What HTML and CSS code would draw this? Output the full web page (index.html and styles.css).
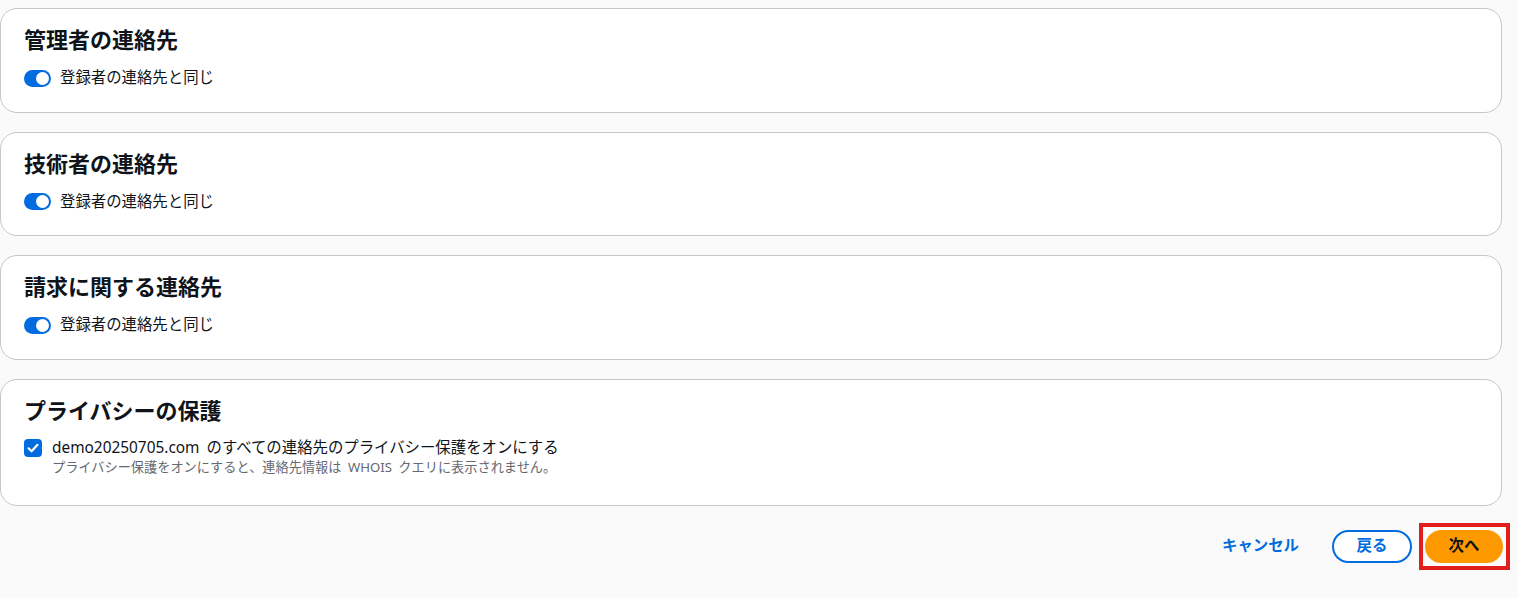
FILE: index.html
```html
<!DOCTYPE html>
<html lang="ja">
<head>
<meta charset="utf-8">
<title>連絡先</title>
<link rel="stylesheet" href="styles.css">
</head>
<body>
<main class="page">
  <section class="card">
    <h2 class="card-title">管理者の連絡先</h2>
    <label class="toggle-row">
      <span class="toggle"><span class="knob"></span></span>
      <span class="toggle-label">登録者の連絡先と同じ</span>
    </label>
  </section>
  <section class="card">
    <h2 class="card-title">技術者の連絡先</h2>
    <label class="toggle-row">
      <span class="toggle"><span class="knob"></span></span>
      <span class="toggle-label">登録者の連絡先と同じ</span>
    </label>
  </section>
  <section class="card">
    <h2 class="card-title">請求に関する連絡先</h2>
    <label class="toggle-row">
      <span class="toggle"><span class="knob"></span></span>
      <span class="toggle-label">登録者の連絡先と同じ</span>
    </label>
  </section>
  <section class="card card-privacy">
    <h2 class="card-title">プライバシーの保護</h2>
    <div class="check-row">
      <span class="checkbox">
        <svg viewBox="0 0 18 18" width="18" height="18"><polyline points="4.5,9.3 7.6,12.3 13.5,5.8" fill="none" stroke="#fff" stroke-width="2.2" stroke-linecap="round" stroke-linejoin="round"/></svg>
      </span>
      <div class="check-text">
        <div class="check-label">demo20250705.com のすべての連絡先のプライバシー保護をオンにする</div>
        <div class="check-desc">プライバシー保護をオンにすると、連絡先情報は WHOIS クエリに表示されません。</div>
      </div>
    </div>
  </section>
  <div class="actions">
    <button class="btn btn-link" type="button">キャンセル</button>
    <button class="btn btn-normal" type="button">戻る</button>
    <span class="highlight">
      <button class="btn btn-primary" type="button">次へ</button>
    </span>
  </div>
</main>
</body>
</html>
```

FILE: styles.css
```css
* { box-sizing: border-box; }
html, body {
  margin: 0;
  padding: 0;
  background: #fafafa;
}
body {
  font-family: "Noto Sans", "Noto Sans CJK JP", sans-serif;
  color: #0f141a;
  font-size: 15.4px;
  min-height: 598px;
}
.page {
  padding: 8px 16px 30px 0;
  display: flex;
  flex-direction: column;
  gap: 19px;
}
.card {
  background: #ffffff;
  border: 1px solid #c6c6cd;
  border-radius: 17px;
  padding: 15px 23px 22px 23px;
  height: 104.5px;
}
.card-privacy {
  height: 127px;
}
.card-title {
  margin: 0;
  font-size: 22px;
  line-height: 30px;
  font-weight: 700;
  color: #0f141a;
}
.toggle-row {
  margin-top: 13px;
  display: flex;
  align-items: center;
  gap: 9px;
  height: 22px;
}
.toggle {
  width: 27px;
  height: 17px;
  border-radius: 9px;
  background: #006ce0;
  display: flex;
  align-items: center;
  justify-content: flex-end;
  padding: 0 2px;
  flex-shrink: 0;
}
.knob {
  width: 13px;
  height: 13px;
  border-radius: 50%;
  background: #ffffff;
}
.toggle-label {
  font-size: 15.4px;
  line-height: 22px;
}
.check-row {
  margin-top: 12px;
  display: flex;
  align-items: flex-start;
  gap: 10px;
}
.checkbox {
  width: 18px;
  height: 18px;
  border-radius: 4px;
  background: #006ce0;
  margin-top: 2px;
  display: flex;
  flex-shrink: 0;
}
.check-label {
  font-size: 15.4px;
  line-height: 22px;
  word-spacing: 3px;
}
.check-desc {
  font-size: 13.2px;
  line-height: 17px;
  color: #656871;
  word-spacing: 3px;
}
.actions {
  margin-top: 5px;
  display: flex;
  justify-content: flex-end;
  align-items: center;
  gap: 9px;
  height: 33px;
}
.btn {
  font-family: "Noto Sans", "Noto Sans CJK JP", sans-serif;
  font-size: 15.4px;
  font-weight: 700;
  line-height: 22px;
  height: 33px;
  padding: 0 22px;
  border-radius: 20px;
  border: 2px solid transparent;
  background: transparent;
  cursor: pointer;
}
.btn-link {
  color: #006ce0;
}
.btn-normal {
  color: #006ce0;
  border-color: #006ce0;
  background: #ffffff;
  width: 80px;
  padding: 0;
}
.highlight {
  display: flex;
  flex-shrink: 0;
  border: 4px solid #e21d1d;
  padding: 3px 3px 3px 2px;
  margin: 0 -8px 0 -2px;
}
.btn-primary {
  background: #ff9900;
  border-color: #ff9900;
  color: #0f141a;
  width: 78px;
  padding: 0;
}
```
